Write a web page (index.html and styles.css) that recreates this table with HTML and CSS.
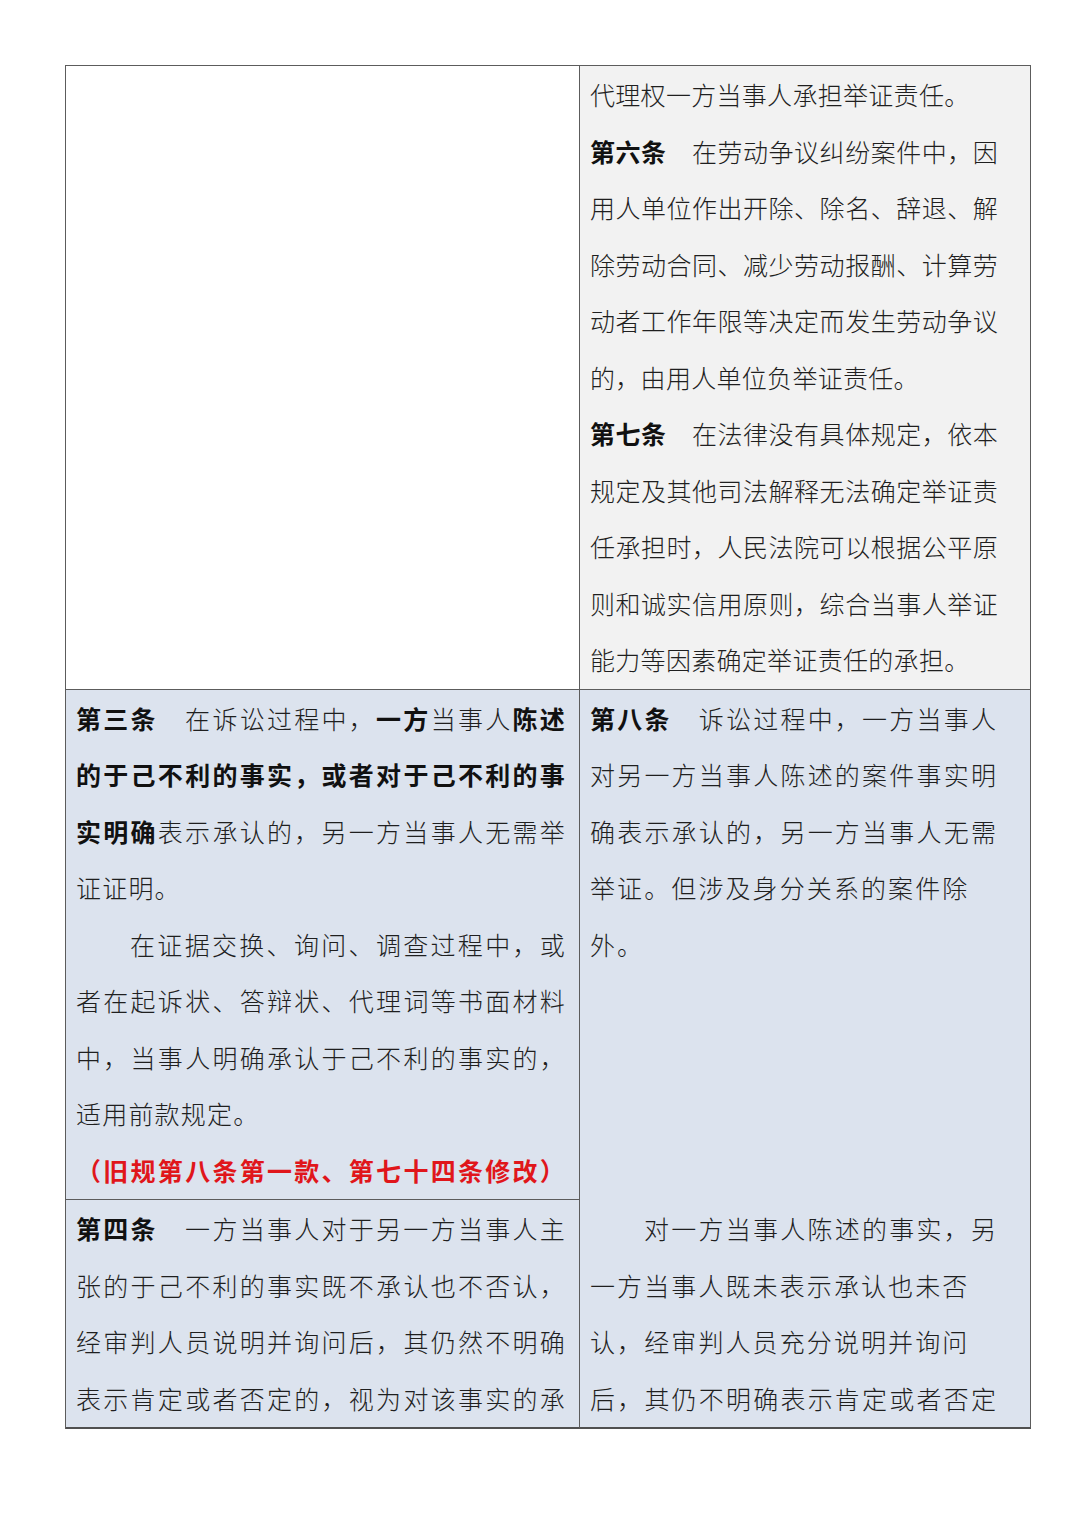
FILE: index.html
```html
<!DOCTYPE html>
<html lang="zh-CN">
<head>
<meta charset="utf-8">
<title>证据规定对照表</title>
<link rel="stylesheet" href="styles.css">
</head>
<body>
<div class="page">
  <div class="grid">
    <div class="cell blank"></div>
    <div class="cell gray right-col tight">
      <div class="ln">代理权一方当事人承担举证责任。</div>
      <div class="ln f"><b>第六条</b>　在劳动争议纠纷案件中，因</div>
      <div class="ln f">用人单位作出开除、除名、辞退、解</div>
      <div class="ln f">除劳动合同、减少劳动报酬、计算劳</div>
      <div class="ln f">动者工作年限等决定而发生劳动争议</div>
      <div class="ln">的，由用人单位负举证责任。</div>
      <div class="ln f"><b>第七条</b>　在法律没有具体规定，依本</div>
      <div class="ln f">规定及其他司法解释无法确定举证责</div>
      <div class="ln f">任承担时，人民法院可以根据公平原</div>
      <div class="ln f">则和诚实信用原则，综合当事人举证</div>
      <div class="ln">能力等因素确定举证责任的承担。</div>
    </div>

    <div class="cell blue left-col">
      <div class="ln f"><b>第三条</b>　在诉讼过程中，<b>一方</b>当事人<b>陈述</b></div>
      <div class="ln f"><b>的于己不利的事实，或者对于己不利的事</b></div>
      <div class="ln f"><b>实明确</b>表示承认的，另一方当事人无需举</div>
      <div class="ln">证证明。</div>
      <div class="ln f indent">在证据交换、询问、调查过程中，或</div>
      <div class="ln f">者在起诉状、答辩状、代理词等书面材料</div>
      <div class="ln f">中，当事人明确承认于己不利的事实的，</div>
      <div class="ln">适用前款规定。</div>
      <div class="ln f red">（旧规第八条第一款、第七十四条修改）</div>
    </div>

    <div class="cell blue right-col span">
      <div class="para">
        <div class="ln f"><b>第八条</b>　诉讼过程中，一方当事人</div>
        <div class="ln f">对另一方当事人陈述的案件事实明</div>
        <div class="ln f">确表示承认的，另一方当事人无需</div>
        <div class="ln">举证。但涉及身分关系的案件除</div>
        <div class="ln">外。</div>
      </div>
      <div class="para">
        <div class="ln f indent">对一方当事人陈述的事实，另</div>
        <div class="ln">一方当事人既未表示承认也未否</div>
        <div class="ln">认，经审判人员充分说明并询问</div>
        <div class="ln f">后，其仍不明确表示肯定或者否定</div>
      </div>
    </div>

    <div class="cell blue left-col">
      <div class="ln f"><b>第四条</b>　一方当事人对于另一方当事人主</div>
      <div class="ln f">张的于己不利的事实既不承认也不否认，</div>
      <div class="ln f">经审判人员说明并询问后，其仍然不明确</div>
      <div class="ln f">表示肯定或者否定的，视为对该事实的承</div>
    </div>
  </div>
</div>
</body>
</html>
```

FILE: styles.css
```css
html, body {
  margin: 0;
  padding: 0;
  background: #ffffff;
}

.page {
  padding: 65px 0 100px 65px;
  font-family: "Noto Sans CJK SC", "Noto Sans", sans-serif;
  font-size: 25px;
  color: #1f1f1f;
  font-weight: 300;
}

.grid {
  display: grid;
  grid-template-columns: 514px 451px;
  width: 965px;
  border-top: 1px solid #5c5c5c;
  border-left: 1px solid #5c5c5c;
}

.cell {
  border-right: 1px solid #5c5c5c;
  border-bottom: 1px solid #5c5c5c;
  padding-top: 0;
  padding-bottom: 1px;
  box-sizing: border-box;
  min-width: 0;
}

.blank { background: #ffffff; }
.gray { background: #f2f2f2; }
.blue { background: #dce3ee; }

.left-col {
  padding-left: 10px;
  padding-right: 13px;
  letter-spacing: 1.2px;
}

.right-col {
  padding-left: 10px;
  padding-right: 32px;
  letter-spacing: 2.1px;
}

.right-col.tight {
  letter-spacing: 0.3px;
}

.span {
  grid-column: 2;
  grid-row: 2 / 4;
  display: flex;
  flex-direction: column;
  justify-content: space-between;
  border-bottom-width: 2px;
  border-bottom-color: #505050;
}

.grid > .cell:last-child {
  border-bottom-width: 2px;
  border-bottom-color: #505050;
}

.ln {
  height: 56.5px;
  line-height: 56.5px;
  white-space: nowrap;
  text-align: left;
}

.ln.f {
  text-align: justify;
  text-align-last: justify;
  text-justify: inter-character;
}

.indent {
  padding-left: 54px;
}

.ln b {
  font-weight: 700;
  color: #111;
}

.red {
  color: #e0161b;
  font-weight: 700;
}
```
